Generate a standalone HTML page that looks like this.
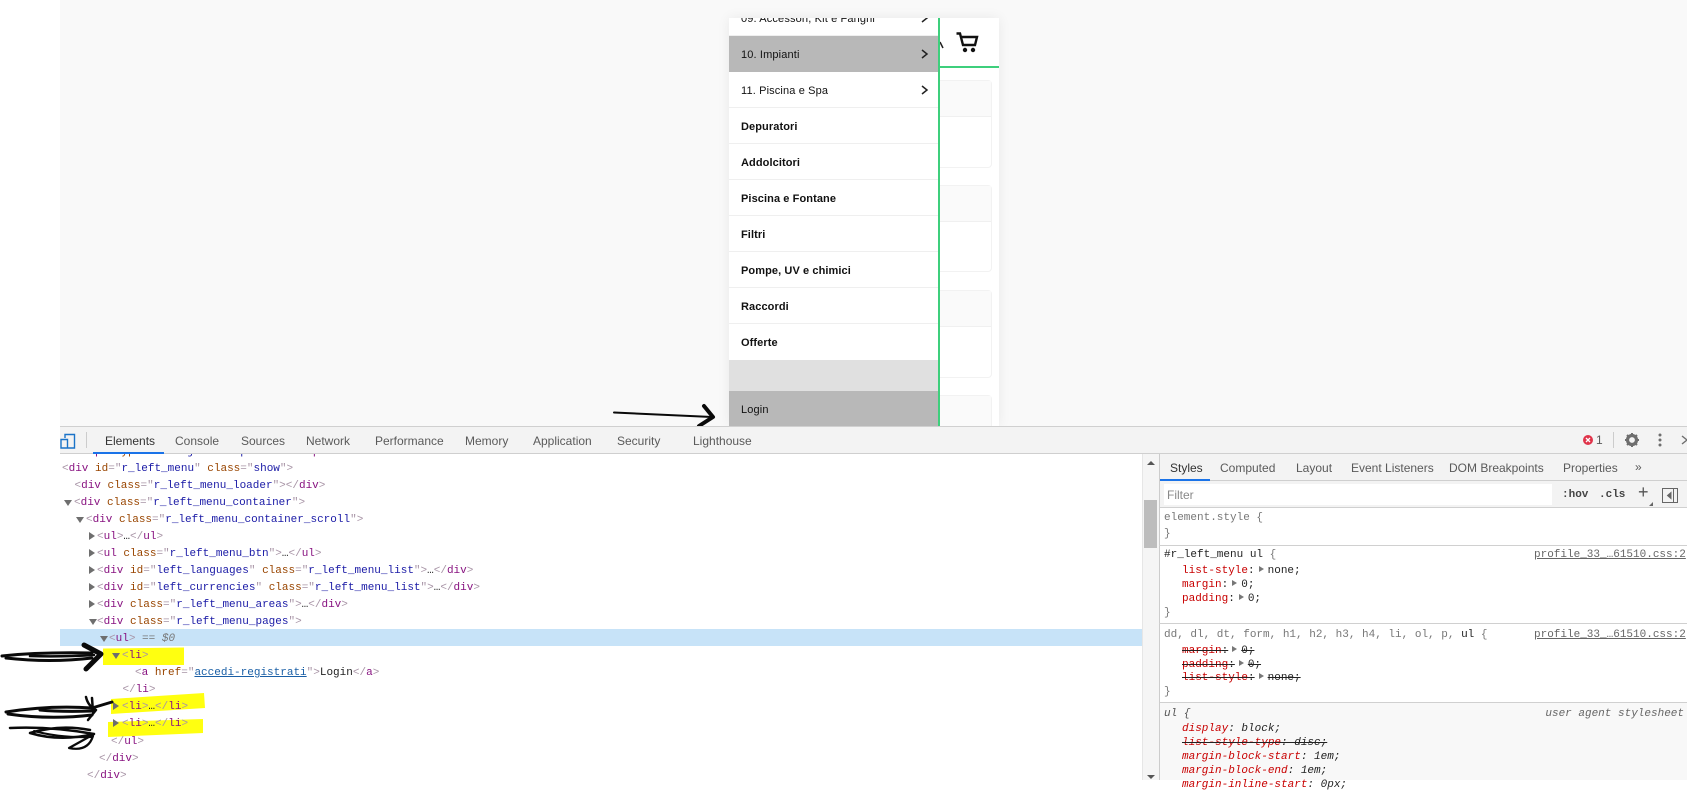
<!DOCTYPE html>
<html><head><meta charset="utf-8"><style>
html,body{margin:0;padding:0;width:1687px;height:780px;overflow:hidden;background:#fff}
div,span{box-sizing:border-box}
.a{position:absolute}
#page{left:60px;top:0;width:1627px;height:426px;background:#f9f9f9}
#phone{left:729px;top:18px;width:270px;height:408px;background:#fff;box-shadow:0 0 12px rgba(0,0,0,.07);overflow:hidden}
.card{position:absolute;left:190px;width:73px;background:#fff;border:1px solid #f2f2f2;border-radius:4px}
.card i{display:block;height:35px;background:#fafafa;border-bottom:1px solid #f0f0f0}
.row{position:absolute;left:0;width:209px;height:36px;padding-left:12px;font:11px/38px "Liberation Sans",sans-serif;color:#111;letter-spacing:.14px;border-bottom:1px solid #efefef;background:#fff}
.row b{font-weight:700;letter-spacing:.09px;color:#111}
.row svg{position:absolute;left:192px;top:13px}
.sel{background:#b8b8b8;border-bottom:0}
.t{position:absolute;font:12px/16px "Liberation Sans",sans-serif;color:#5a5a5a;white-space:nowrap}
.m{position:absolute;font:11px/17px "Liberation Mono",monospace;color:#222;white-space:pre}
.g{color:#a894a6}.n{color:#881280}.o{color:#994500}.v{color:#1a1aa6}
.k{color:#c80000}.d{color:#222}.x{text-decoration:line-through}
.tri{position:absolute;width:0;height:0}
.r{border-left:6px solid #6e6e6e;border-top:4px solid transparent;border-bottom:4px solid transparent}
.dn{border-top:6px solid #6e6e6e;border-left:4px solid transparent;border-right:4px solid transparent}
.s{position:absolute;font:11px/14px "Liberation Mono",monospace;color:#222;white-space:pre}
.sm{display:inline-block;width:0;height:0;border-left:5px solid #777;border-top:3px solid transparent;border-bottom:3px solid transparent;margin:0 4px 0 4px;vertical-align:1px}
.l{position:absolute;left:1159px;width:528px;height:1px;background:#d0d0d0}
</style></head><body>
<div class="a" id="page"></div>
<div class="a" id="phone">
  <div class="card" style="top:62px;height:88px"><i></i></div>
  <div class="card" style="top:167px;height:87px"><i></i></div>
  <div class="card" style="top:272px;height:88px"><i></i></div>
  <div class="card" style="top:377px;height:60px"><i></i></div>
  <div class="a" style="left:209px;top:48px;width:61px;height:2px;background:#3ecf7c"></div>
  <svg class="a" style="left:209px;top:0" width="61" height="48" viewBox="0 0 61 48"><path d="M2 24l3 6" stroke="#222" stroke-width="1.500" fill="none"/><path d="M18.500 15.500h3.500l3 11.500h12l2-8H23" stroke="#111" stroke-width="2.400" fill="none"/><circle cx="27" cy="32" r="2.200" fill="#111"/><circle cx="35" cy="32" r="2.200" fill="#111"/></svg>
  <div class="row" style="top:-18px">09. Accessori, Kit e Fanghi<svg width="8" height="10" viewBox="0 0 8 10"><path d="M1 1l5 4-5 4" stroke="#222" stroke-width="1.500" fill="none"/></svg></div>
  <div class="row sel" style="top:18px">10. Impianti<svg width="8" height="10" viewBox="0 0 8 10"><path d="M1 1l5 4-5 4" stroke="#222" stroke-width="1.500" fill="none"/></svg></div>
  <div class="row" style="top:54px">11. Piscina e Spa<svg width="8" height="10" viewBox="0 0 8 10"><path d="M1 1l5 4-5 4" stroke="#222" stroke-width="1.500" fill="none"/></svg></div>
  <div class="row" style="top:90px"><b>Depuratori</b></div>
  <div class="row" style="top:126px"><b>Addolcitori</b></div>
  <div class="row" style="top:162px"><b>Piscina e Fontane</b></div>
  <div class="row" style="top:198px"><b>Filtri</b></div>
  <div class="row" style="top:234px"><b>Pompe, UV e chimici</b></div>
  <div class="row" style="top:270px"><b>Raccordi</b></div>
  <div class="row" style="top:306px;border-bottom:0"><b>Offerte</b></div>
  <div class="a" style="left:0;top:342px;width:209px;height:31px;background:#e0e0e0"></div>
  <div class="row sel" style="top:373px">Login</div>
  <div class="a" style="left:209px;top:0;width:1.5px;height:408px;background:#3ecf7c"></div>
</div>

<!-- devtools -->
<div class="a" style="left:60px;top:426px;width:1627px;height:354px;background:#fff"></div>

<!-- elements panel -->
<div class="a" style="left:60px;top:629px;width:1082px;height:17px;background:#c7e3f8"></div>
<svg class="a" style="left:0;top:640px" width="230" height="110" viewBox="0 0 230 110">
<path d="M103 8.500L184 7.500L184 25L103 25Z" fill="#ffff10"/>
<path d="M111 59L204 53L205 68L111 74Z" fill="#ffff10"/>
<path d="M108 82L203 79L203 93L108 97Z" fill="#ffff10"/>
</svg>
<div class="a" style="left:0;top:1px;width:1142px;height:779px">
<div class="m" style="left:62px;top:443px;height:10px;overflow:visible"><span class="g">&lt;</span><span class="n">script</span> <span class="o">type</span><span class="g">="</span><span class="v">text/javascript</span><span class="g">"&gt;</span>…<span class="g">&lt;/</span><span class="n">script</span><span class="g">&gt;</span></div>
<div class="m" style="left:62px;top:460px"><span class="g">&lt;</span><span class="n">div</span> <span class="o">id</span><span class="g">="</span><span class="v">r_left_menu</span><span class="g">"</span> <span class="o">class</span><span class="g">="</span><span class="v">show</span><span class="g">"&gt;</span></div>
<div class="m" style="left:74.500px;top:477px"><span class="g">&lt;</span><span class="n">div</span> <span class="o">class</span><span class="g">="</span><span class="v">r_left_menu_loader</span><span class="g">"&gt;&lt;/</span><span class="n">div</span><span class="g">&gt;</span></div>
<div class="tri dn" style="left:64px;top:499px"></div>
<div class="m" style="left:74px;top:494px"><span class="g">&lt;</span><span class="n">div</span> <span class="o">class</span><span class="g">="</span><span class="v">r_left_menu_container</span><span class="g">"&gt;</span></div>
<div class="tri dn" style="left:76px;top:516px"></div>
<div class="m" style="left:86px;top:511px"><span class="g">&lt;</span><span class="n">div</span> <span class="o">class</span><span class="g">="</span><span class="v">r_left_menu_container_scroll</span><span class="g">"&gt;</span></div>
<div class="tri r" style="left:89px;top:531px"></div>
<div class="m" style="left:97px;top:528px"><span class="g">&lt;</span><span class="n">ul</span><span class="g">&gt;</span>…<span class="g">&lt;/</span><span class="n">ul</span><span class="g">&gt;</span></div>
<div class="tri r" style="left:89px;top:548px"></div>
<div class="m" style="left:97px;top:545px"><span class="g">&lt;</span><span class="n">ul</span> <span class="o">class</span><span class="g">="</span><span class="v">r_left_menu_btn</span><span class="g">"&gt;</span>…<span class="g">&lt;/</span><span class="n">ul</span><span class="g">&gt;</span></div>
<div class="tri r" style="left:89px;top:565px"></div>
<div class="m" style="left:97px;top:562px"><span class="g">&lt;</span><span class="n">div</span> <span class="o">id</span><span class="g">="</span><span class="v">left_languages</span><span class="g">"</span> <span class="o">class</span><span class="g">="</span><span class="v">r_left_menu_list</span><span class="g">"&gt;</span>…<span class="g">&lt;/</span><span class="n">div</span><span class="g">&gt;</span></div>
<div class="tri r" style="left:89px;top:582px"></div>
<div class="m" style="left:97px;top:579px"><span class="g">&lt;</span><span class="n">div</span> <span class="o">id</span><span class="g">="</span><span class="v">left_currencies</span><span class="g">"</span> <span class="o">class</span><span class="g">="</span><span class="v">r_left_menu_list</span><span class="g">"&gt;</span>…<span class="g">&lt;/</span><span class="n">div</span><span class="g">&gt;</span></div>
<div class="tri r" style="left:89px;top:599px"></div>
<div class="m" style="left:97px;top:596px"><span class="g">&lt;</span><span class="n">div</span> <span class="o">class</span><span class="g">="</span><span class="v">r_left_menu_areas</span><span class="g">"&gt;</span>…<span class="g">&lt;/</span><span class="n">div</span><span class="g">&gt;</span></div>
<div class="tri dn" style="left:89px;top:618px"></div>
<div class="m" style="left:97px;top:613px"><span class="g">&lt;</span><span class="n">div</span> <span class="o">class</span><span class="g">="</span><span class="v">r_left_menu_pages</span><span class="g">"&gt;</span></div>
<div class="tri dn" style="left:100px;top:635px"></div>
<div class="m" style="left:109px;top:630px"><span class="g">&lt;</span><span class="n">ul</span><span class="g">&gt;</span> <span style="color:#777">==</span> <i style="color:#777">$0</i></div>
<div class="tri dn" style="left:112px;top:652px"></div>
<div class="m" style="left:122px;top:647px"><span class="g">&lt;</span><span class="n">li</span><span class="g">&gt;</span></div>
<div class="m" style="left:135px;top:664px"><span class="g">&lt;</span><span class="n">a</span> <span class="o">href</span><span class="g">="</span><span style="color:#1a5fa6;text-decoration:underline">accedi-registrati</span><span class="g">"&gt;</span>Login<span class="g">&lt;/</span><span class="n">a</span><span class="g">&gt;</span></div>
<div class="m" style="left:122.500px;top:681px"><span class="g">&lt;/</span><span class="n">li</span><span class="g">&gt;</span></div>
<div class="tri r" style="left:113px;top:701px"></div>
<div class="m" style="left:122px;top:698px"><span class="g">&lt;</span><span class="n">li</span><span class="g">&gt;</span>…<span class="g">&lt;/</span><span class="n">li</span><span class="g">&gt;</span></div>
<div class="tri r" style="left:113px;top:718px"></div>
<div class="m" style="left:122px;top:715px"><span class="g">&lt;</span><span class="n">li</span><span class="g">&gt;</span>…<span class="g">&lt;/</span><span class="n">li</span><span class="g">&gt;</span></div>
<div class="m" style="left:111px;top:733px"><span class="g">&lt;/</span><span class="n">ul</span><span class="g">&gt;</span></div>
<div class="m" style="left:99px;top:750px"><span class="g">&lt;/</span><span class="n">div</span><span class="g">&gt;</span></div>
<div class="m" style="left:87px;top:767px"><span class="g">&lt;/</span><span class="n">div</span><span class="g">&gt;</span></div>
</div>

<!-- scribbles -->
<svg class="a" style="left:0;top:400px" width="730" height="380" viewBox="0 0 730 380" fill="none" stroke="#0a0a0a" stroke-linecap="round" stroke-linejoin="round">
<path d="M614 12.500L712 17" stroke-width="2"/>
<path d="M704 6L713 17L699 26" stroke-width="4"/>
<path d="M2 256Q40 252 92 253" stroke-width="3"/><path d="M6 258Q50 263 92 258" stroke-width="3"/><path d="M30 256Q60 257 94 255" stroke-width="2.500"/>
<path d="M84 245L101 254L86 269" stroke-width="5"/>
<path d="M6 312Q50 305 92 308L112 302" stroke-width="3"/><path d="M8 314Q50 320 92 315" stroke-width="3"/><path d="M40 310Q60 312 92 311" stroke-width="3"/>
<path d="M86 297Q88 306 96 310M92 298L93 312M88 320L96 310" stroke-width="2.500"/>
<path d="M10 328Q50 326 94 334Q60 342 30 333Q60 324 90 330" stroke-width="2.500"/>
<path d="M34 331Q60 338 92 337" stroke-width="2"/>
<path d="M94 334Q80 342 69 348Q88 352 93 336" stroke-width="2.200"/>
</svg>

<!-- toolbar -->
<div class="a" style="left:60px;top:426px;width:1627px;height:28px;background:#f3f3f3;border-top:1px solid #d0d0d0;border-bottom:1px solid #cfcfcf"></div>
<svg class="a" style="left:60px;top:433px" width="16" height="17" viewBox="0 0 16 17" fill="none" stroke="#1a73c8" stroke-width="1.400"><path d="M5 5V1.500h9.500V15H8M1 6.500h6.500V15H1z"/></svg>
<div class="a" style="left:86px;top:432px;width:1px;height:16px;background:#ccc"></div>
<div class="a" style="left:93px;top:452px;width:71px;height:2px;background:#1a73e8"></div>
<div class="t" style="left:105px;top:433px;color:#333">Elements</div>
<div class="t" style="left:175px;top:433px">Console</div>
<div class="t" style="left:241px;top:433px">Sources</div>
<div class="t" style="left:306px;top:433px">Network</div>
<div class="t" style="left:375px;top:433px">Performance</div>
<div class="t" style="left:465px;top:433px">Memory</div>
<div class="t" style="left:533px;top:433px">Application</div>
<div class="t" style="left:617px;top:433px">Security</div>
<div class="t" style="left:693px;top:433px">Lighthouse</div>
<svg class="a" style="left:1582px;top:434px" width="12" height="12" viewBox="0 0 12 12"><circle cx="6" cy="6" r="5" fill="#e0344a"/><path d="M4 4l4 4M8 4l-4 4" stroke="#fff" stroke-width="1.300"/></svg>
<div class="t" style="left:1596px;top:432px">1</div>
<div class="a" style="left:1613px;top:432px;width:1px;height:16px;background:#ccc"></div>
<svg class="a" style="left:1624px;top:432px" width="16" height="16" viewBox="0 0 16 16"><circle cx="8" cy="8" r="4.500" fill="none" stroke="#6e6e6e" stroke-width="3.200"/><path d="M8 1v14M1 8h14M3 3l10 10M13 3L3 13" stroke="#6e6e6e" stroke-width="2" stroke-dasharray="2.500 9 2.500 0"/></svg>
<svg class="a" style="left:1658px;top:432px" width="4" height="16" viewBox="0 0 4 16" fill="#6e6e6e"><circle cx="2" cy="3" r="1.500"/><circle cx="2" cy="8" r="1.500"/><circle cx="2" cy="13" r="1.500"/></svg>
<svg class="a" style="left:1681px;top:435px" width="6" height="10" viewBox="0 0 6 10" fill="none" stroke="#6e6e6e" stroke-width="1.400"><path d="M1 1l5 4-5 4"/></svg>

<!-- scrollbar -->
<div class="a" style="left:1142px;top:454px;width:17px;height:326px;background:#f5f5f5;border-left:1px solid #e6e6e6"></div>
<div class="a" style="left:1144px;top:500px;width:13px;height:48px;background:#bdbdbd"></div>
<div class="tri" style="left:1147px;top:461px;border-bottom:4px solid #555;border-left:4px solid transparent;border-right:4px solid transparent"></div>
<div class="tri" style="left:1147px;top:775px;border-top:4px solid #555;border-left:4px solid transparent;border-right:4px solid transparent"></div>

<!-- sidebar -->
<div class="a" style="left:1159px;top:454px;width:1px;height:326px;background:#ccc"></div>
<div class="a" style="left:1160px;top:454px;width:527px;height:27px;background:#f3f3f3;border-bottom:1px solid #cfcfcf"></div>
<div class="a" style="left:1160px;top:479px;width:50px;height:2px;background:#1a73e8"></div>
<div class="t" style="left:1170px;top:460px;color:#333">Styles</div>
<div class="t" style="left:1220px;top:460px">Computed</div>
<div class="t" style="left:1296px;top:460px">Layout</div>
<div class="t" style="left:1351px;top:460px">Event Listeners</div>
<div class="t" style="left:1449px;top:460px">DOM Breakpoints</div>
<div class="t" style="left:1563px;top:460px">Properties</div>
<div class="t" style="left:1635px;top:459px">»</div>
<div class="a" style="left:1160px;top:481px;width:527px;height:27px;background:#f3f3f3;border-bottom:1px solid #d0d0d0"></div>
<div class="a" style="left:1164px;top:484px;width:388px;height:21px;background:#fff"></div>
<div class="t" style="left:1167px;top:487px;color:#888">Filter</div>
<div class="s" style="left:1562px;top:488px;font-weight:700;color:#444">:hov</div>
<div class="s" style="left:1599px;top:488px;font-weight:700;color:#444">.cls</div>
<div class="t" style="left:1638px;top:484px;font-size:18px;color:#555">+</div>
<div class="tri" style="left:1649px;top:502px;border-bottom:4px solid #666;border-left:4px solid transparent"></div>
<svg class="a" style="left:1662px;top:488px" width="16" height="15" viewBox="0 0 16 15" fill="none" stroke="#666"><rect x=".5" y=".5" width="15" height="14"/><path d="M11.500 1v13"/><path d="M9 4.500L5.500 7.500 9 10.500z" fill="#666"/></svg>

<div class="s" style="left:1164px;top:511px;color:#777">element.style {</div>
<div class="s" style="left:1164px;top:527px;color:#777">}</div>
<div class="l" style="top:545px"></div>
<div class="s" style="left:1164px;top:548px"><span style="color:#222">#r_left_menu ul</span> <span style="color:#777">{</span></div>
<div class="s" style="left:1534px;top:548px;width:150px;text-align:right;color:#666;text-decoration:underline">profile_33_…61510.css:2</div>
<div class="s" style="left:1182px;top:564px"><span class="k">list-style</span>:<span class="sm"></span>none;</div>
<div class="s" style="left:1182px;top:578px"><span class="k">margin</span>:<span class="sm"></span>0;</div>
<div class="s" style="left:1182px;top:592px"><span class="k">padding</span>:<span class="sm"></span>0;</div>
<div class="s" style="left:1164px;top:606px;color:#777">}</div>
<div class="l" style="top:623px"></div>
<div class="s" style="left:1164px;top:628px;color:#777">dd, dl, dt, form, h1, h2, h3, h4, li, ol, p, <span style="color:#222">ul</span> {</div>
<div class="s" style="left:1534px;top:628px;width:150px;text-align:right;color:#666;text-decoration:underline">profile_33_…61510.css:2</div>
<div class="s x" style="left:1182px;top:644px"><span class="k">margin</span>:<span class="sm"></span>0;</div>
<div class="s x" style="left:1182px;top:658px"><span class="k">padding</span>:<span class="sm"></span>0;</div>
<div class="s x" style="left:1182px;top:671px"><span class="k">list-style</span>:<span class="sm"></span>none;</div>
<div class="s" style="left:1164px;top:685px;color:#777">}</div>
<div class="a" style="left:1160px;top:702px;width:527px;height:78px;background:#f8f8f8;border-top:1px solid #d0d0d0"></div>
<div class="s" style="left:1164px;top:707px;font-style:italic;color:#555">ul {</div>
<div class="s" style="left:1534px;top:707px;width:150px;text-align:right;font-style:italic;color:#666">user agent stylesheet</div>
<div class="s" style="left:1182px;top:722px;font-style:italic"><span class="k">display</span>: block;</div>
<div class="s x" style="left:1182px;top:736px;font-style:italic"><span class="k">list-style-type</span>: disc;</div>
<div class="s" style="left:1182px;top:750px;font-style:italic"><span class="k">margin-block-start</span>: 1em;</div>
<div class="s" style="left:1182px;top:764px;font-style:italic"><span class="k">margin-block-end</span>: 1em;</div>
<div class="s" style="left:1182px;top:778px;font-style:italic"><span class="k">margin-inline-start</span>: 0px;</div>
</body></html>
